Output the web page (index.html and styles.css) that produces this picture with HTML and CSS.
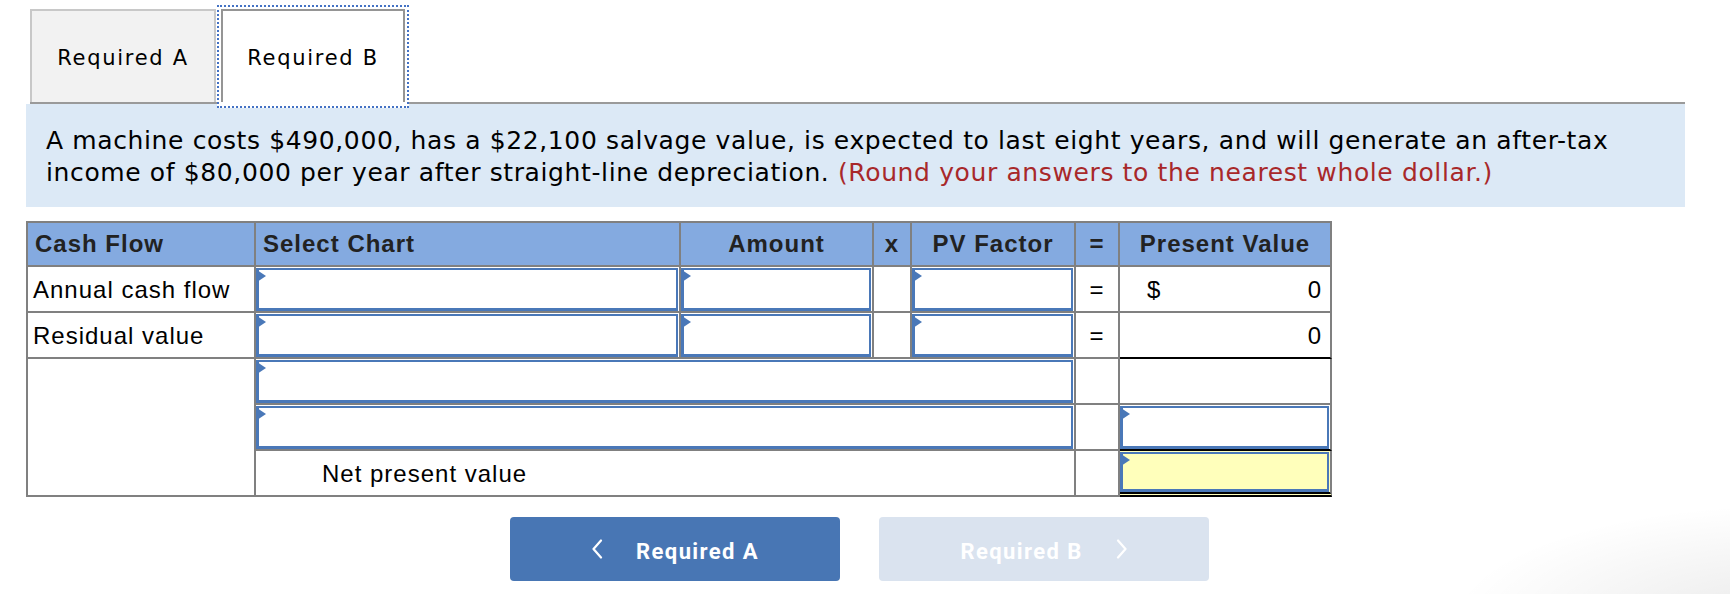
FILE: index.html
```html
<!DOCTYPE html>
<html lang="en">
<head>
<meta charset="utf-8">
<title>Required B</title>
<link rel="stylesheet" href="styles.css">
</head>
<body>
<div class="page">
  <div class="tabs">
    <div class="tab tab-inactive">Required A</div>
    <div class="tab-focus"><div class="tab tab-active">Required B</div></div>
  </div>
  <div class="problem">A machine costs $490,000, has a $22,100 salvage value, is expected to last eight years, and will generate an after-tax income of $80,000 per year after straight-line depreciation. <span class="hint">(Round your answers to the nearest whole dollar.)</span></div>

  <div class="sheet">
    <div class="cell head">Cash Flow</div>
    <div class="cell head">Select Chart</div>
    <div class="cell head center">Amount</div>
    <div class="cell head center">x</div>
    <div class="cell head center">PV Factor</div>
    <div class="cell head center">=</div>
    <div class="cell head center">Present Value</div>

    <div class="cell label">Annual cash flow</div>
    <div class="cell field"><div class="box"></div></div>
    <div class="cell field"><div class="box"></div></div>
    <div class="cell"></div>
    <div class="cell field"><div class="box"></div></div>
    <div class="cell center">=</div>
    <div class="cell money"><span>$</span><span>0</span></div>

    <div class="cell label">Residual value</div>
    <div class="cell field"><div class="box"></div></div>
    <div class="cell field"><div class="box"></div></div>
    <div class="cell"></div>
    <div class="cell field"><div class="box"></div></div>
    <div class="cell center">=</div>
    <div class="cell money sum-line"><span></span><span>0</span></div>

    <div class="cell rows3"></div>
    <div class="cell field span4"><div class="box"></div></div>
    <div class="cell"></div>
    <div class="cell"></div>

    <div class="cell field span4"><div class="box"></div></div>
    <div class="cell"></div>
    <div class="cell field sum-line"><div class="box"></div></div>

    <div class="cell span4 npv">Net present value</div>
    <div class="cell"></div>
    <div class="cell field total"><div class="box box-total"></div></div>
  </div>

  <div class="nav">
    <button class="btn btn-prev" type="button">
      <svg class="chev" width="12" height="20" viewBox="0 0 12 20"><polyline points="10,1.5 2.5,10 10,18.5" fill="none" stroke="#fff" stroke-width="2.2" stroke-linecap="round" stroke-linejoin="round"/></svg>
      <span>Required A</span>
    </button>
    <button class="btn btn-next" type="button" disabled>
      <span>Required B</span>
      <svg class="chev" width="12" height="20" viewBox="0 0 12 20"><polyline points="2,1.5 9.5,10 2,18.5" fill="none" stroke="#fff" stroke-width="2.2" stroke-linecap="round" stroke-linejoin="round"/></svg>
    </button>
  </div>
</div>
</body>
</html>
```

FILE: styles.css
```css
html {
  height: 100%;
  background: #fff radial-gradient(ellipse 340px 120px at calc(100% + 60px) calc(100% + 30px), rgba(0,0,0,0.085), rgba(0,0,0,0) 100%) no-repeat;
}
body {
  margin: 0;
  color: #000;
}
.page {
  padding: 5px 0 0 26px;
}

/* tabs */
.tabs {
  display: flex;
  align-items: flex-start;
  margin-left: 4px;
  width: 1655px;
  height: 93px;
  padding-top: 4px;
  border-bottom: 2px solid #9a9a9a;
}
.tab {
  box-sizing: border-box;
  height: 93px;
  display: flex;
  align-items: center;
  justify-content: center;
  font-family: "DejaVu Sans", Verdana, sans-serif;
  font-size: 21px;
  letter-spacing: 1.7px;
  padding-top: 2px;
  border: 2px solid #c8c8c8;
  border-bottom: none;
}
.tab-inactive {
  width: 186px;
  background: #f2f2f2;
}
.tab-focus {
  position: relative;
  z-index: 1;
  margin-left: 1px;
  margin-top: -4px;
  padding: 2px 2px 0;
  height: 97px;
  border: 2px dotted #4472c4;
  background: #fff;
}
.tab-active {
  width: 184px;
  background: #fff;
  border-color: #959595;
}

/* problem statement */
.problem {
  box-sizing: border-box;
  width: 1659px;
  padding: 21px 20px 18px;
  background: #dce9f6;
  font-family: "DejaVu Sans", Verdana, sans-serif;
  font-size: 25px;
  line-height: 32px;
  letter-spacing: 0.62px;
}
.hint {
  color: #a8282a;
}

/* worksheet */
.sheet {
  display: grid;
  grid-template-columns: 228px 425px 193px 38px 164px 44px 212px;
  grid-template-rows: 44px repeat(5, 46px);
  width: max-content;
  margin-top: 14px;
  border-top: 2px solid #808080;
  border-left: 2px solid #808080;
  font-family: "Liberation Sans", Arial, sans-serif;
  font-size: 24px;
  letter-spacing: 1px;
}
.cell {
  box-sizing: border-box;
  min-width: 0;
  display: flex;
  align-items: center;
  padding-top: 2px;
  border-right: 2px solid #808080;
  border-bottom: 2px solid #808080;
  background: #fff;
}
.head {
  background: #84aae0;
  color: #222;
  font-weight: 700;
  padding-top: 0;
  padding-left: 7px;
}
.center {
  justify-content: center;
  padding-left: 0;
}
.label {
  padding-left: 5px;
}
.money {
  justify-content: space-between;
  padding: 2px 8px 0 27px;
}
.sum-line {
  border-bottom-color: #000;
}
.rows3 {
  grid-row: span 3;
}
.span4 {
  grid-column: span 4;
}
.npv {
  padding-left: 66px;
}
.field {
  align-items: stretch;
  padding: 1px 1px 0 0;
}
.box {
  position: relative;
  flex: 1;
  border: 2px solid #4a78b8;
  border-left-width: 3px;
  border-bottom-width: 3px;
  background: #fff;
}
.box::before {
  content: "";
  position: absolute;
  left: -2px;
  top: 0;
  border-left: 9px solid #4a78b8;
  border-top: 6px solid transparent;
  border-bottom: 6px solid transparent;
}
.total {
  background: #ffffbb;
  border-bottom: 5px double #000;
}
.box-total {
  background: #ffffbb;
}

/* navigation buttons */
.nav {
  display: flex;
  gap: 39px;
  margin-top: 20px;
  padding-left: 484px;
}
.btn {
  width: 330px;
  height: 64px;
  border: 0;
  border-radius: 4px;
  display: flex;
  align-items: center;
  justify-content: center;
  gap: 33px;
  font-family: Roboto, "Liberation Sans", sans-serif;
  font-weight: 700;
  font-size: 22px;
  letter-spacing: 1.4px;
  color: #fff;
  padding: 5px 0 0;
  cursor: pointer;
}
.btn-prev {
  background: #4876b4;
}
.btn-next {
  background: #dae3ef;
  cursor: default;
}
.chev {
  display: block;
  margin-top: -5px;
}
```
